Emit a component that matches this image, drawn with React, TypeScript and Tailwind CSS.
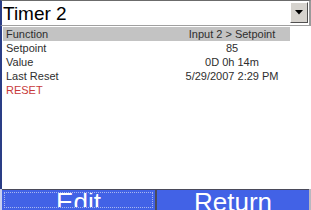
import React from "react";

const rows: { label: string; value: string; red?: boolean; sel?: boolean }[] = [
  { label: "Function", value: "Input 2 > Setpoint", sel: true },
  { label: "Setpoint", value: "85" },
  { label: "Value", value: "0D 0h 14m" },
  { label: "Last Reset", value: "5/29/2007 2:29 PM" },
  { label: "RESET", value: "", red: true },
];

export default function App() {
  return (
    <div
      className="w-[311px] h-[210px] bg-white overflow-hidden flex flex-col"
      style={{ fontFamily: '"Liberation Sans", Arial, sans-serif' }}
    >
      {/* header combobox */}
      <div className="h-[26px] shrink-0 flex border-t border-t-[#6b6b6b] border-l-2 border-l-[#2a3d86] border-b border-b-[#a0a0a0] border-r-2 border-r-[#9a9a9a]">
        <div className="flex-1 pl-[1px] pt-[1px] text-[19px] leading-[23px] text-black overflow-hidden">Timer 2</div>
        <div className="w-[18px] h-[21px] mt-[1px] mr-[1px] bg-[#d6d3ce] border border-t-white border-l-white border-r-[#505050] border-b-[#505050] flex items-center justify-center">
          <svg width="8" height="5" viewBox="0 0 8 5">
            <path d="M0 0 H8 L4 4.5 Z" fill="#000" />
          </svg>
        </div>
      </div>
      {/* list */}
      <div className="flex-1 border-l-2 border-l-[#2a3d86] pt-[1px] text-[11px] leading-[14px]">
        {rows.map((r) => (
          <div
            key={r.label}
            className={`ml-[1px] w-[287px] h-[14px] flex ${r.sel ? "bg-[#c3c3c3]" : ""}`}
          >
            <div className={`flex-1 pl-[3px] ${r.red ? "text-[#c83a3a]" : "text-[#2e2e2e]"}`}>
              {r.label}
            </div>
            <div className="w-[116px] text-center text-[#2e2e2e]">{r.value}</div>
          </div>
        ))}
      </div>
      {/* buttons */}
      <div className="h-[21px] shrink-0 flex bg-[#4a4a5a] border-l-2 border-l-[#c8d0f0]">
        <div className="w-[153px] mt-[1px] bg-[#4262e6] p-[2px] overflow-hidden">
          <div className="h-full border border-dotted border-[#a8b6f0] flex justify-center overflow-hidden">
            <span className="text-white text-[26px] leading-[26px] -mt-[4px]">Edit</span>
          </div>
        </div>
        <div className="w-[2px]" />
        <div className="w-[152px] mt-[1px] bg-[#4262e6] flex justify-center overflow-hidden">
          <span className="text-white text-[26px] leading-[26px] -mt-[1px]">Return</span>
        </div>
        <div className="flex-1 bg-[#b8b8c0]" />
      </div>
    </div>
  );
}
